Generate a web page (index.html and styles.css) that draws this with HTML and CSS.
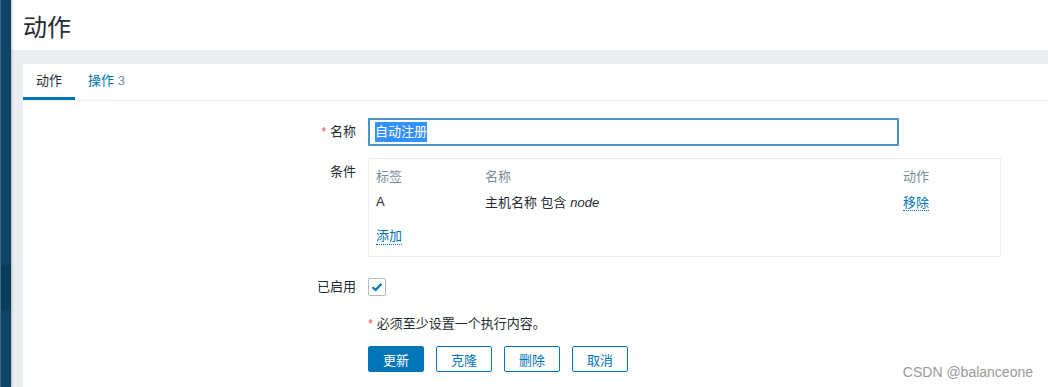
FILE: index.html
```html
<!DOCTYPE html>
<html lang="zh-CN">
<head>
    <meta charset="UTF-8">
    <meta name="viewport" content="width=device-width, initial-scale=1.0">
    <title>动作</title>
    <link rel="stylesheet" href="styles.css">
</head>
<body>
    <div class="app">
        <aside class="sidebar">
            <div class="sidebar-active"></div>
        </aside>

        <main class="main">
            <header class="page-header">
                <h1>动作</h1>
            </header>

            <div class="content">
                <div class="panel">
                    <ul class="tabs">
                        <li class="tab active">动作</li>
                        <li class="tab">操作 <span class="count">3</span></li>
                    </ul>

                    <form class="form">
                        <div class="form-row row-name">
                            <label class="form-label"><span class="required">*</span> 名称</label>
                            <div class="text-input"><span class="selected">自动注册</span></div>
                        </div>

                        <div class="form-row row-cond">
                            <label class="form-label">条件</label>
                            <div class="cond-box">
                                <table class="cond-table">
                                    <tr class="head">
                                        <td class="col-tag">标签</td>
                                        <td class="col-name">名称</td>
                                        <td class="col-act">动作</td>
                                    </tr>
                                    <tr>
                                        <td>A</td>
                                        <td>主机名称 包含 <em>node</em></td>
                                        <td><a class="link" href="#">移除</a></td>
                                    </tr>
                                </table>
                                <a class="link add" href="#">添加</a>
                            </div>
                        </div>

                        <div class="form-row row-enabled">
                            <label class="form-label">已启用</label>
                            <span class="checkbox">
                                <svg width="12" height="10" viewBox="0 0 12 10"><path d="M1.5 5.2 L4.6 8 L10.5 1.8" fill="none" stroke="#0275b8" stroke-width="2.2"/></svg>
                            </span>
                        </div>

                        <div class="form-row row-note">
                            <span></span>
                            <div class="note"><span class="required">*</span> 必须至少设置一个执行内容。</div>
                        </div>

                        <div class="form-row row-buttons">
                            <span></span>
                            <div class="buttons">
                                <button type="button" class="btn primary">更新</button>
                                <button type="button" class="btn">克隆</button>
                                <button type="button" class="btn">删除</button>
                                <button type="button" class="btn">取消</button>
                            </div>
                        </div>
                    </form>
                </div>
            </div>
        </main>
    </div>

    <div class="watermark">CSDN @balanceone</div>
</body>
</html>
```

FILE: styles.css
```css
body {
    margin: 0;
    font-family: Arial, "Liberation Sans", "Noto Sans CJK SC", sans-serif;
    font-size: 13px;
    color: #1f2c33;
    background-color: #ebeef0;
    overflow: hidden;
}

.app {
    display: flex;
    height: 387px;
}

.sidebar {
    width: 10px;
    border-left: 1px solid #3d6a86;
    background-color: #0b4466;
    box-shadow: 1px 0 2px rgba(0, 0, 0, 0.25);
    padding-top: 265px;
    position: relative;
    z-index: 1;
}

.sidebar-active {
    height: 45px;
    background-color: #0a3c5b;
}

.main {
    flex: 1;
    display: flex;
    flex-direction: column;
    min-height: 0;
}

.page-header {
    flex-shrink: 0;
    height: 50px;
    background-color: #fff;
    padding-left: 12px;
    display: flex;
    align-items: center;
}

.page-header h1 {
    margin: 0;
    font-size: 24px;
    font-weight: normal;
    color: #1f2c33;
}

.content {
    flex: 1;
    min-height: 0;
    padding: 14px 0 0 12px;
}

.panel {
    background-color: #fff;
    height: 100%;
}

.tabs {
    list-style: none;
    margin: 0;
    padding: 0;
    display: flex;
    height: 36px;
    border-bottom: 1px solid #ebeef0;
}

.tab {
    padding: 0 13px;
    line-height: 33px;
    color: #0275b8;
    border-bottom: 3px solid transparent;
}

.tab.active {
    color: #1f2c33;
    border-bottom-color: #0275b8;
}

.tab .count {
    color: #768d99;
}

.form {
    padding-top: 17px;
}

.form-row {
    display: grid;
    grid-template-columns: 333px 1fr;
    column-gap: 12px;
    margin-bottom: 12px;
}

.form-label {
    text-align: right;
    line-height: 28px;
}

.required {
    color: #e45959;
}

.text-input {
    width: 517px;
    height: 24px;
    border: 2px solid #4796c4;
    border-radius: 1px;
    padding: 0 5px;
    display: flex;
    align-items: center;
}

.selected {
    background-color: #3390ff;
    color: #fff;
    line-height: 20px;
}

.cond-box {
    width: 617px;
    height: 84px;
    border: 1px solid #ebeef0;
    padding: 4px 7px 9px;
}

.cond-table {
    border-collapse: collapse;
    width: 100%;
}

.cond-table td {
    padding: 0;
    height: 29px;
    vertical-align: middle;
}

.cond-table .head td {
    color: #768d99;
    height: 24px;
}

.col-tag {
    width: 109px;
}

.col-act {
    width: 90px;
}

.cond-table em {
    font-style: italic;
}

.link {
    color: #0275b8;
    text-decoration: none;
    border-bottom: 1px dotted #0275b8;
}

.add {
    display: inline-block;
    margin-top: 12px;
    line-height: 16px;
}

.row-enabled {
    margin-top: 16px;
    align-items: center;
}

.checkbox {
    width: 16px;
    height: 16px;
    border: 1px solid #acbbc2;
    border-radius: 2px;
    display: flex;
    align-items: center;
    justify-content: center;
}

.row-note {
    margin-top: 12px;
    margin-bottom: 14px;
}

.note {
    color: #1f2c33;
}

.buttons {
    display: flex;
    gap: 12px;
}

.btn {
    height: 26px;
    width: 56px;
    padding: 0;
    background-color: #fff;
    color: #0275b8;
    border: 1px solid #0275b8;
    border-radius: 2px;
    font-family: inherit;
    font-size: 13px;
}

.btn.primary {
    background-color: #0275b8;
    color: #fff;
}

.watermark {
    position: absolute;
    right: 15px;
    top: 364px;
    color: #999;
    font-size: 14px;
}
```
